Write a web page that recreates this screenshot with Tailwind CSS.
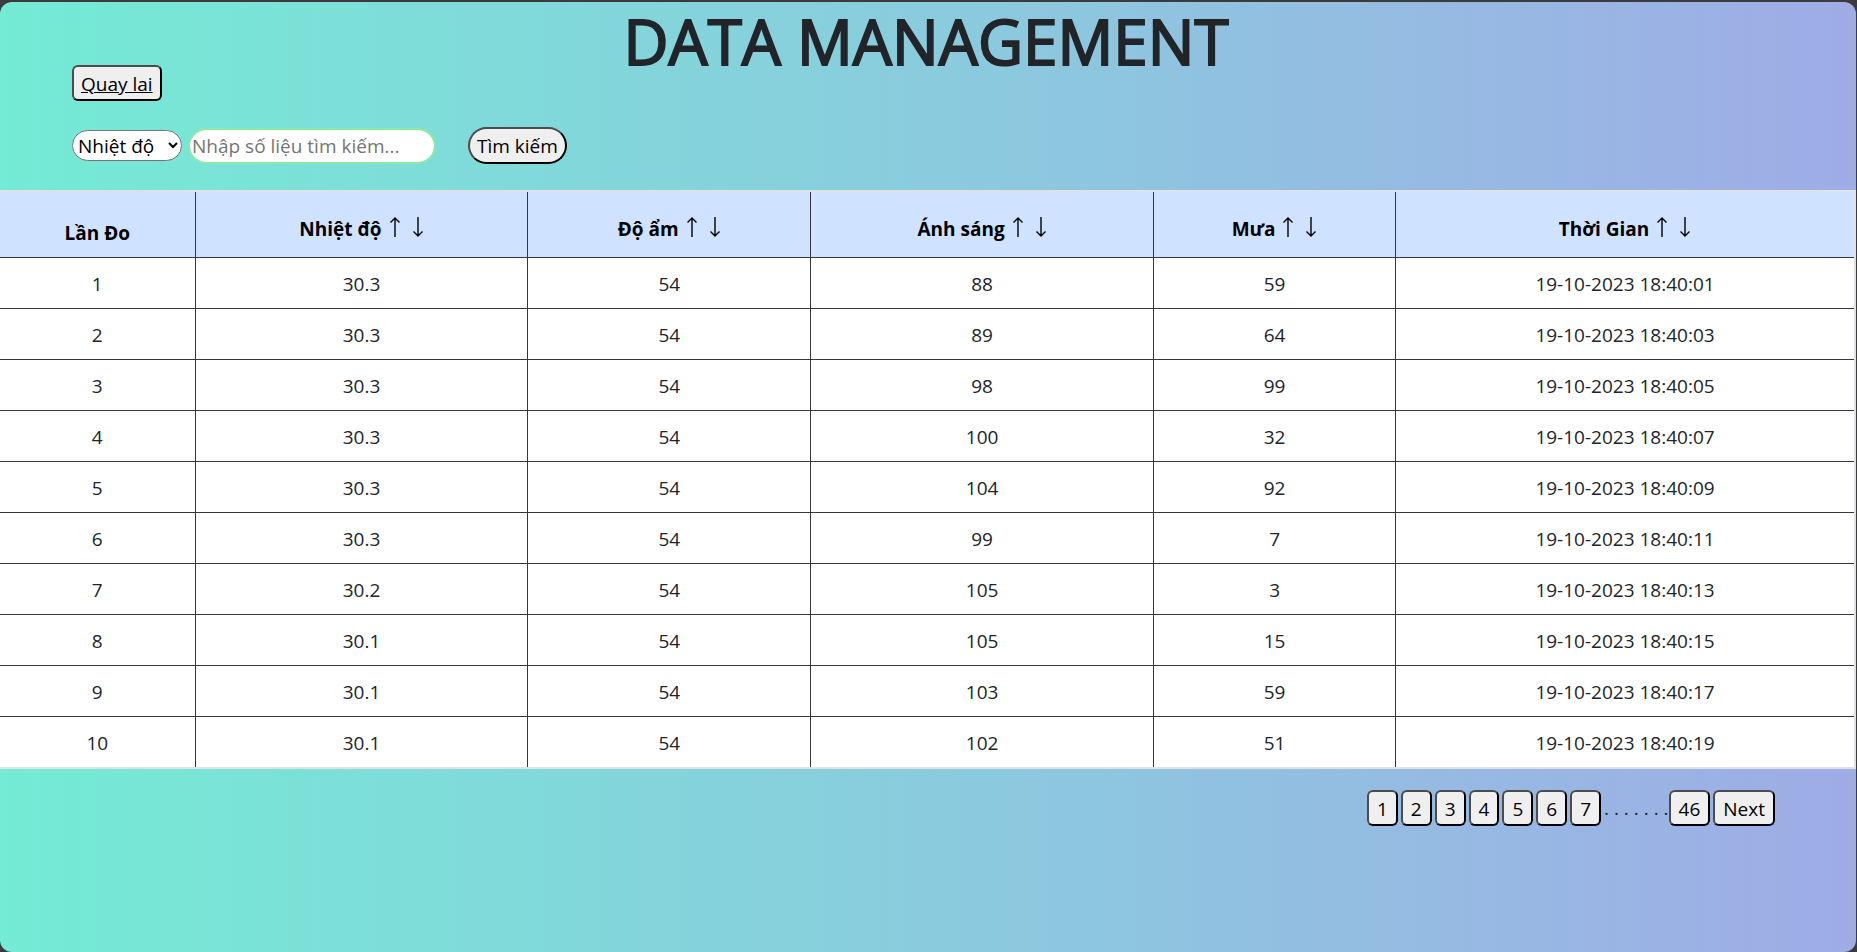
<!DOCTYPE html>
<html lang="vi">
<head>
<meta charset="utf-8">
<meta name="viewport" content="width=device-width, initial-scale=1">
<title>Data Management</title>
<script src="https://cdn.jsdelivr.net/npm/@tailwindcss/browser@4"></script>
</head>
<body class="min-h-screen flex flex-col bg-[#3b3b3b] pt-[2px] pr-px font-['Open_Sans','Noto_Sans',sans-serif] text-[19px] leading-[30px] text-[#212529]">
<svg class="hidden" aria-hidden="true">
  <symbol id="up" viewBox="0 0 12 22"><path d="M6 21V2M1.5 6.5L6 2L10.5 6.5" fill="none" stroke="currentColor" stroke-width="1.4"/></symbol>
  <symbol id="down" viewBox="0 0 12 22"><path d="M6 1V20M1.5 15.5L6 20L10.5 15.5" fill="none" stroke="currentColor" stroke-width="1.4"/></symbol>
</svg>
<div class="grow flex flex-col rounded-[12px] bg-[linear-gradient(to_right,#74ebd5,#9face6)]">
  <header class="pl-[72px] pr-[76px]">
    <h1 class="h-[63px] text-center text-[62px] leading-[79px] font-normal [-webkit-text-stroke:2px_#212529]">DATA MANAGEMENT</h1>
    <a href="#" class="inline-flex items-center h-9 px-[7px] pt-px rounded-md border-2 border-t-[#4c4c4c] border-l-[#4c4c4c] border-r-black border-b-black bg-[#efefef] text-black underline">Quay lai</a>
    <form class="flex items-center mt-[26px] mb-[26px]">
      <select aria-label="Trường tìm kiếm" class="w-[110px] h-[31px] mr-[6px] pl-px rounded-full border border-[#767676] bg-white text-black leading-[28px]">
        <option>Nhiệt độ</option><option>Độ ẩm</option><option>Ánh sáng</option><option>Mưa</option>
      </select>
      <input type="text" aria-label="Số liệu tìm kiếm" placeholder="Nhập số liệu tìm kiếm..." class="w-[248px] h-9 mr-8 px-[2px] pt-px rounded-full border-2 border-[#90ee90]/70 bg-white bg-clip-padding placeholder:text-[#757575]">
      <button type="button" class="h-[37px] px-[7px] pt-px rounded-full border-2 border-t-[#4c4c4c] border-l-[#4c4c4c] border-r-black border-b-black bg-[#efefef] text-black">Tìm kiếm</button>
    </form>
  </header>
  <table class="w-full table-fixed border-separate border-spacing-0 border-y-2 border-r-2 border-[#dee2e6] bg-white text-center">
    <colgroup><col class="w-[10.55%]"><col class="w-[17.95%]"><col class="w-[15.25%]"><col class="w-[18.5%]"><col class="w-[13.05%]"><col></colgroup>
    <thead class="bg-[#cfe2ff] text-black text-[19px] *:*:h-[66px] *:*:border-b *:*:border-r *:*:border-[#32383e] *:*:last:border-r-0">
      <tr>
        <th scope="col" class="pt-[17px]">Lần Đo</th>
        <th scope="col" class="pt-[9px]"><span class="inline-flex items-center">Nhiệt độ <button type="button" aria-label="Tăng dần" class="ml-[7px] mb-1"><svg class="w-3 h-[22px]"><use href="#up"/></svg></button><button type="button" aria-label="Giảm dần" class="ml-[11px] mb-1"><svg class="w-3 h-[22px]"><use href="#down"/></svg></button></span></th>
        <th scope="col" class="pt-[9px]"><span class="inline-flex items-center">Độ ẩm <button type="button" aria-label="Tăng dần" class="ml-[7px] mb-1"><svg class="w-3 h-[22px]"><use href="#up"/></svg></button><button type="button" aria-label="Giảm dần" class="ml-[11px] mb-1"><svg class="w-3 h-[22px]"><use href="#down"/></svg></button></span></th>
        <th scope="col" class="pt-[9px]"><span class="inline-flex items-center">Ánh sáng <button type="button" aria-label="Tăng dần" class="ml-[7px] mb-1"><svg class="w-3 h-[22px]"><use href="#up"/></svg></button><button type="button" aria-label="Giảm dần" class="ml-[11px] mb-1"><svg class="w-3 h-[22px]"><use href="#down"/></svg></button></span></th>
        <th scope="col" class="pt-[9px]"><span class="inline-flex items-center">Mưa <button type="button" aria-label="Tăng dần" class="ml-[7px] mb-1"><svg class="w-3 h-[22px]"><use href="#up"/></svg></button><button type="button" aria-label="Giảm dần" class="ml-[11px] mb-1"><svg class="w-3 h-[22px]"><use href="#down"/></svg></button></span></th>
        <th scope="col" class="pt-[9px]"><span class="inline-flex items-center">Thời Gian <button type="button" aria-label="Tăng dần" class="ml-[7px] mb-1"><svg class="w-3 h-[22px]"><use href="#up"/></svg></button><button type="button" aria-label="Giảm dần" class="ml-[11px] mb-1"><svg class="w-3 h-[22px]"><use href="#down"/></svg></button></span></th>
      </tr>
    </thead>
    <tbody class="*:*:h-[51px] *:*:pt-px *:*:border-b *:*:border-r *:*:border-[#32383e] *:*:last:border-r-0 *:last:*:border-b-0 *:last:*:h-[50px]">
      <tr><td>1</td><td>30.3</td><td>54</td><td>88</td><td>59</td><td>19-10-2023 18:40:01</td></tr>
      <tr><td>2</td><td>30.3</td><td>54</td><td>89</td><td>64</td><td>19-10-2023 18:40:03</td></tr>
      <tr><td>3</td><td>30.3</td><td>54</td><td>98</td><td>99</td><td>19-10-2023 18:40:05</td></tr>
      <tr><td>4</td><td>30.3</td><td>54</td><td>100</td><td>32</td><td>19-10-2023 18:40:07</td></tr>
      <tr><td>5</td><td>30.3</td><td>54</td><td>104</td><td>92</td><td>19-10-2023 18:40:09</td></tr>
      <tr><td>6</td><td>30.3</td><td>54</td><td>99</td><td>7</td><td>19-10-2023 18:40:11</td></tr>
      <tr><td>7</td><td>30.2</td><td>54</td><td>105</td><td>3</td><td>19-10-2023 18:40:13</td></tr>
      <tr><td>8</td><td>30.1</td><td>54</td><td>105</td><td>15</td><td>19-10-2023 18:40:15</td></tr>
      <tr><td>9</td><td>30.1</td><td>54</td><td>103</td><td>59</td><td>19-10-2023 18:40:17</td></tr>
      <tr><td>10</td><td>30.1</td><td>54</td><td>102</td><td>51</td><td>19-10-2023 18:40:19</td></tr>
    </tbody>
  </table>
  <nav aria-label="Phân trang" class="flex justify-end items-center gap-[3px] mt-[21px] pr-[81px] [&_button]:h-9 [&_button]:px-2 [&_button]:pt-px [&_button]:rounded-md [&_button]:border-2 [&_button]:border-t-[#4c4c4c] [&_button]:border-l-[#4c4c4c] [&_button]:border-r-black [&_button]:border-b-black [&_button]:bg-[#efefef] [&_button]:text-black">
    <button type="button">1</button><button type="button">2</button><button type="button">3</button><button type="button">4</button><button type="button">5</button><button type="button">6</button><button type="button">7</button>
    <span class="-mr-[3px]">. . . . . . .</span>
    <button type="button">46</button><button type="button">Next</button>
  </nav>
</div>
</body>
</html>
